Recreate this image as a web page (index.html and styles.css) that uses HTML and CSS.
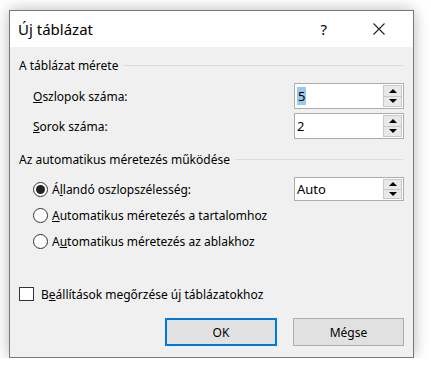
FILE: index.html
```html
<!DOCTYPE html>
<html lang="hu">
  <head>
    <meta charset="UTF-8" />
    <title>Új táblázat</title>
    <link rel="stylesheet" href="styles.css">
  </head>
  <body>
    <div class="dialog">
      <div class="titlebar">
        <span class="title">Új táblázat</span>
        <span class="help">?</span>
        <svg class="close" width="12" height="12" viewBox="0 0 12 12">
          <path d="M0.5 0.5 L11.5 11.5 M11.5 0.5 L0.5 11.5" stroke="#222" stroke-width="1.1" fill="none" />
        </svg>
      </div>

      <div class="content">
        <div class="group first">
          <span>A táblázat mérete</span>
          <div class="rule"></div>
        </div>

        <div class="row">
          <span class="label"><u>O</u>szlopok száma:</span>
          <div class="spin">
            <span class="value"><span class="sel">5</span></span>
            <div class="arrows">
              <div class="arrow"><i class="up"></i></div>
              <div class="arrow"><i class="down"></i></div>
            </div>
          </div>
        </div>

        <div class="row second">
          <span class="label"><u>S</u>orok száma:</span>
          <div class="spin">
            <span class="value">2</span>
            <div class="arrows">
              <div class="arrow"><i class="up"></i></div>
              <div class="arrow"><i class="down"></i></div>
            </div>
          </div>
        </div>

        <div class="group">
          <span>Az automatikus méretezés működése</span>
          <div class="rule"></div>
        </div>

        <div class="option first-option">
          <span class="radio checked"></span>
          <span class="label">Á<u>l</u>landó oszlopszélesség:</span>
          <div class="spin auto">
            <span class="value">Auto</span>
            <div class="arrows">
              <div class="arrow"><i class="up"></i></div>
              <div class="arrow"><i class="down"></i></div>
            </div>
          </div>
        </div>

        <div class="option">
          <span class="radio"></span>
          <span class="label"><u>A</u>utomatikus méretezés a tartalomhoz</span>
        </div>

        <div class="option">
          <span class="radio"></span>
          <span class="label">A<u>u</u>tomatikus méretezés az ablakhoz</span>
        </div>

        <div class="check-row">
          <span class="checkbox"></span>
          <span>B<u>e</u>állítások megőrzése új táblázatokhoz</span>
        </div>

        <div class="buttons">
          <button class="default">OK</button>
          <button>Mégse</button>
        </div>
      </div>
    </div>
  </body>
</html>
```

FILE: styles.css
```css
* {
  box-sizing: border-box;
  margin: 0;
  padding: 0;
}

body {
  font-family: "Noto Sans", "Open Sans", sans-serif;
  font-size: 12px;
  color: #000;
  background: white;
  padding: 10px 0 0 9px;
}

.dialog {
  width: 405px;
  height: 348px;
  border: 1px solid #777;
  box-shadow: 0 0 14px rgba(0, 0, 0, 0.28);
  display: flex;
  flex-direction: column;
}

.titlebar {
  height: 36px;
  background: white;
  display: flex;
  align-items: center;
  padding-left: 8px;
}

.title {
  font-size: 15px;
  flex: 1;
}

.help {
  font-size: 15px;
  margin-right: 46px;
}

.close {
  margin-right: 28px;
}

.content {
  flex: 1;
  background: #f0f0f0;
  padding: 8px 9px 10px 9px;
  display: flex;
  flex-direction: column;
}

.group {
  height: 20px;
  display: flex;
  align-items: center;
  margin-top: 10px;
}

.group.first {
  margin-top: 0;
}

.rule {
  flex: 1;
  height: 1px;
  background: #dcdcdc;
  margin-left: 5px;
  margin-right: 1px;
}

.row {
  height: 26px;
  display: flex;
  align-items: center;
  justify-content: space-between;
  padding-left: 14px;
  margin-top: 8px;
}

.row.second {
  margin-top: 4px;
}

.spin {
  width: 110px;
  height: 26px;
  background: white;
  border: 1px solid #acacac;
  display: flex;
  align-items: center;
}

.spin.auto {
  height: 24px;
  margin-left: auto;
}

.value {
  flex: 1;
  padding-left: 2px;
  font-size: 13px;
}

.sel {
  background: #99c9ef;
  padding: 0 1px;
}

.arrows {
  width: 19px;
  height: 100%;
  display: flex;
  flex-direction: column;
  padding: 1px 0;
  margin-right: 1px;
}

.arrow {
  flex: 1;
  background: #e8e8e8;
  border: 1px solid #c8c8c8;
  display: flex;
  align-items: center;
  justify-content: center;
}

.arrow + .arrow {
  border-top: none;
}

.up {
  border-left: 4px solid transparent;
  border-right: 4px solid transparent;
  border-bottom: 4px solid #000;
}

.down {
  border-left: 4px solid transparent;
  border-right: 4px solid transparent;
  border-top: 4px solid #000;
}

.option {
  height: 24px;
  display: flex;
  align-items: center;
  padding-left: 14px;
  margin-top: 2px;
}

.option.first-option {
  margin-top: 8px;
}

.radio {
  width: 15px;
  height: 15px;
  border: 1px solid #333;
  border-radius: 50%;
  background: white;
  margin-right: 4px;
  display: flex;
  align-items: center;
  justify-content: center;
}

.radio.checked::after {
  content: "";
  width: 9px;
  height: 9px;
  border-radius: 50%;
  background: #222;
}

.check-row {
  height: 20px;
  display: flex;
  align-items: center;
  margin-top: 31px;
}

.checkbox {
  width: 15px;
  height: 14px;
  border: 1px solid #333;
  background: white;
  margin-right: 7px;
}

.buttons {
  display: flex;
  justify-content: flex-end;
  gap: 16px;
  margin-top: 14px;
}

button {
  width: 111px;
  height: 28px;
  font-family: inherit;
  font-size: 12px;
  background: #e1e1e1;
  border: 1px solid #adadad;
}

button.default {
  width: 112px;
  border: 2px solid #0078d7;
}
```
